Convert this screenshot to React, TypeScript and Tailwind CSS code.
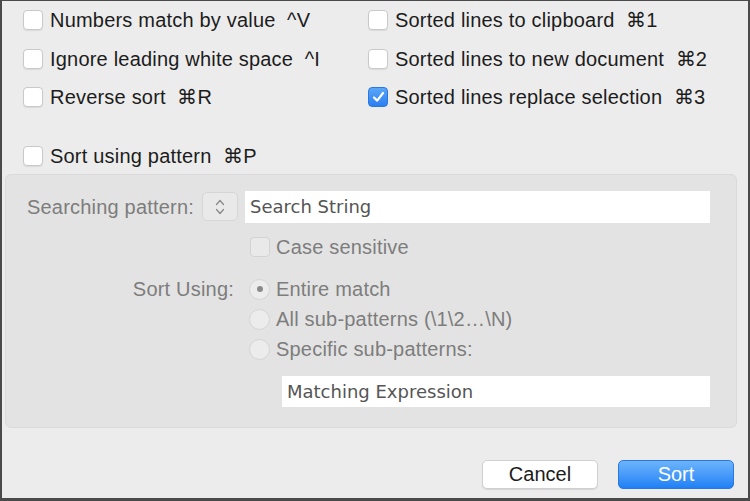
const font = "font-['Helvetica_Neue','Liberation_Sans',Arial,sans-serif]";

function Box({ checked = false, dim = false }: { checked?: boolean; dim?: boolean }) {
  if (checked) {
    return (
      <span className="w-[20px] h-[20px] rounded-[4px] bg-gradient-to-b from-[#5aa6f8] to-[#2a7ef0] border border-[#2b78e0] flex items-center justify-center shrink-0">
        <svg width="13" height="12" viewBox="0 0 13 12">
          <path d="M2 6.5 L5.2 9.6 L11 2" fill="none" stroke="#fff" strokeWidth="2.2" strokeLinecap="round" strokeLinejoin="round" />
        </svg>
      </span>
    );
  }
  return (
    <span
      className={`w-[20px] h-[20px] rounded-[4px] border shrink-0 ${
        dim ? "bg-[#e9e9e9] border-[#d3d3d3]" : "bg-white border-[#c9c9c9] shadow-[0_1px_1px_rgba(0,0,0,0.08)]"
      }`}
    />
  );
}

function Radio({ on = false }: { on?: boolean }) {
  return (
    <span className="w-[21px] h-[21px] rounded-full bg-[#ececec] border border-[#d4d4d4] flex items-center justify-center shrink-0">
      {on && <span className="w-[6px] h-[6px] rounded-full bg-[#8a8a8a]" />}
    </span>
  );
}

function Option({ label, checked }: { label: string; checked?: boolean }) {
  return (
    <div className="h-[38.5px] flex items-center gap-[7px]">
      <Box checked={checked} />
      <span className="text-[20px] tracking-[0.2px] text-[#1c1c1c] whitespace-pre">{label}</span>
    </div>
  );
}

export default function App() {
  return (
    <div
      className={`w-[750px] h-[501px] bg-[#ececec] border-l-2 border-r-2 border-t border-b-[3px] border-[#4a4a4a] flex flex-col overflow-hidden ${font}`}
    >
      {/* options */}
      <div className="grid grid-cols-[345px_1fr] pl-[21px]">
        <div className="flex flex-col">
          <Option label="Numbers match by value  ^V" />
          <Option label="Ignore leading white space  ^I" />
          <Option label="Reverse sort  ⌘R" />
        </div>
        <div className="flex flex-col">
          <Option label="Sorted lines to clipboard  ⌘1" />
          <Option label="Sorted lines to new document  ⌘2" />
          <Option label="Sorted lines replace selection  ⌘3" checked />
        </div>
      </div>

      <div className="pl-[21px] mt-[21px]">
        <div className="h-[36px] flex items-center gap-[7px]">
          <Box />
          <span className="text-[20px] tracking-[0.2px] text-[#1c1c1c] whitespace-pre">Sort using pattern  ⌘P</span>
        </div>
      </div>

      {/* pattern group */}
      <div className="ml-[3px] w-[732px] h-[254px] rounded-[6px] bg-[#e3e3e3] border border-[#dadada] flex flex-col pt-[16px]">
        <div className="flex items-center pl-[21px]">
          <span className="w-[175px] text-[20px] tracking-[0.2px] text-[#7d7d7d] whitespace-nowrap">Searching pattern:</span>
          <span className="w-[36px] h-[29px] rounded-[5px] bg-[#e9e9e9] border border-[#d6d6d6] flex items-center justify-center">
            <svg width="12" height="20" viewBox="0 0 12 20">
              <path d="M2.5 7.5 L6 3.5 L9.5 7.5 M2.5 12.5 L6 16.5 L9.5 12.5" fill="none" stroke="#8a8a8a" strokeWidth="1.3" strokeLinecap="round" strokeLinejoin="round" />
            </svg>
          </span>
          <div className="ml-[7px] w-[465px] h-[32px] bg-white flex items-center pl-[5px]">
            <span className="text-[18px] text-[#555] font-['DejaVu_Sans',sans-serif]">Search String</span>
          </div>
        </div>

        <div className="flex items-center gap-[6px] pl-[244px] mt-[14px]">
          <Box dim />
          <span className="text-[20px] tracking-[0.2px] text-[#7d7d7d] leading-[21px]">Case sensitive</span>
        </div>

        <div className="flex mt-[21px]">
          <span className="w-[228px] text-right text-[20px] tracking-[0.2px] text-[#7d7d7d] leading-[21px]">Sort Using:</span>
          <div className="flex flex-col gap-[9px] ml-[15px]">
            <div className="flex items-center gap-[6px]">
              <Radio on />
              <span className="text-[20px] tracking-[0.2px] text-[#7d7d7d] leading-[21px]">Entire match</span>
            </div>
            <div className="flex items-center gap-[6px]">
              <Radio />
              <span className="text-[20px] tracking-[0.2px] text-[#7d7d7d] leading-[21px]">All sub-patterns (\1\2…\N)</span>
            </div>
            <div className="flex items-center gap-[6px]">
              <Radio />
              <span className="text-[20px] tracking-[0.2px] text-[#7d7d7d] leading-[21px]">Specific sub-patterns:</span>
            </div>
          </div>
        </div>

        <div className="ml-[276px] mt-[16px] w-[428px] h-[31px] bg-white flex items-center pl-[5px]">
          <span className="text-[18px] text-[#555] font-['DejaVu_Sans',sans-serif]">Matching Expression</span>
        </div>
      </div>

      {/* buttons */}
      <div className="flex justify-end gap-[20px] pr-[14px] mt-[32px]">
        <button className="w-[116px] h-[29px] rounded-[5px] bg-white border border-[#d0d0d0] shadow-[0_1px_1px_rgba(0,0,0,0.1)] text-[20px] leading-none text-[#1c1c1c]">
          Cancel
        </button>
        <button className="w-[116px] h-[29px] rounded-[5px] bg-gradient-to-b from-[#6cb4fb] to-[#1e80f5] border border-[#2a78e2] text-[20px] leading-none text-white">
          Sort
        </button>
      </div>
    </div>
  );
}
